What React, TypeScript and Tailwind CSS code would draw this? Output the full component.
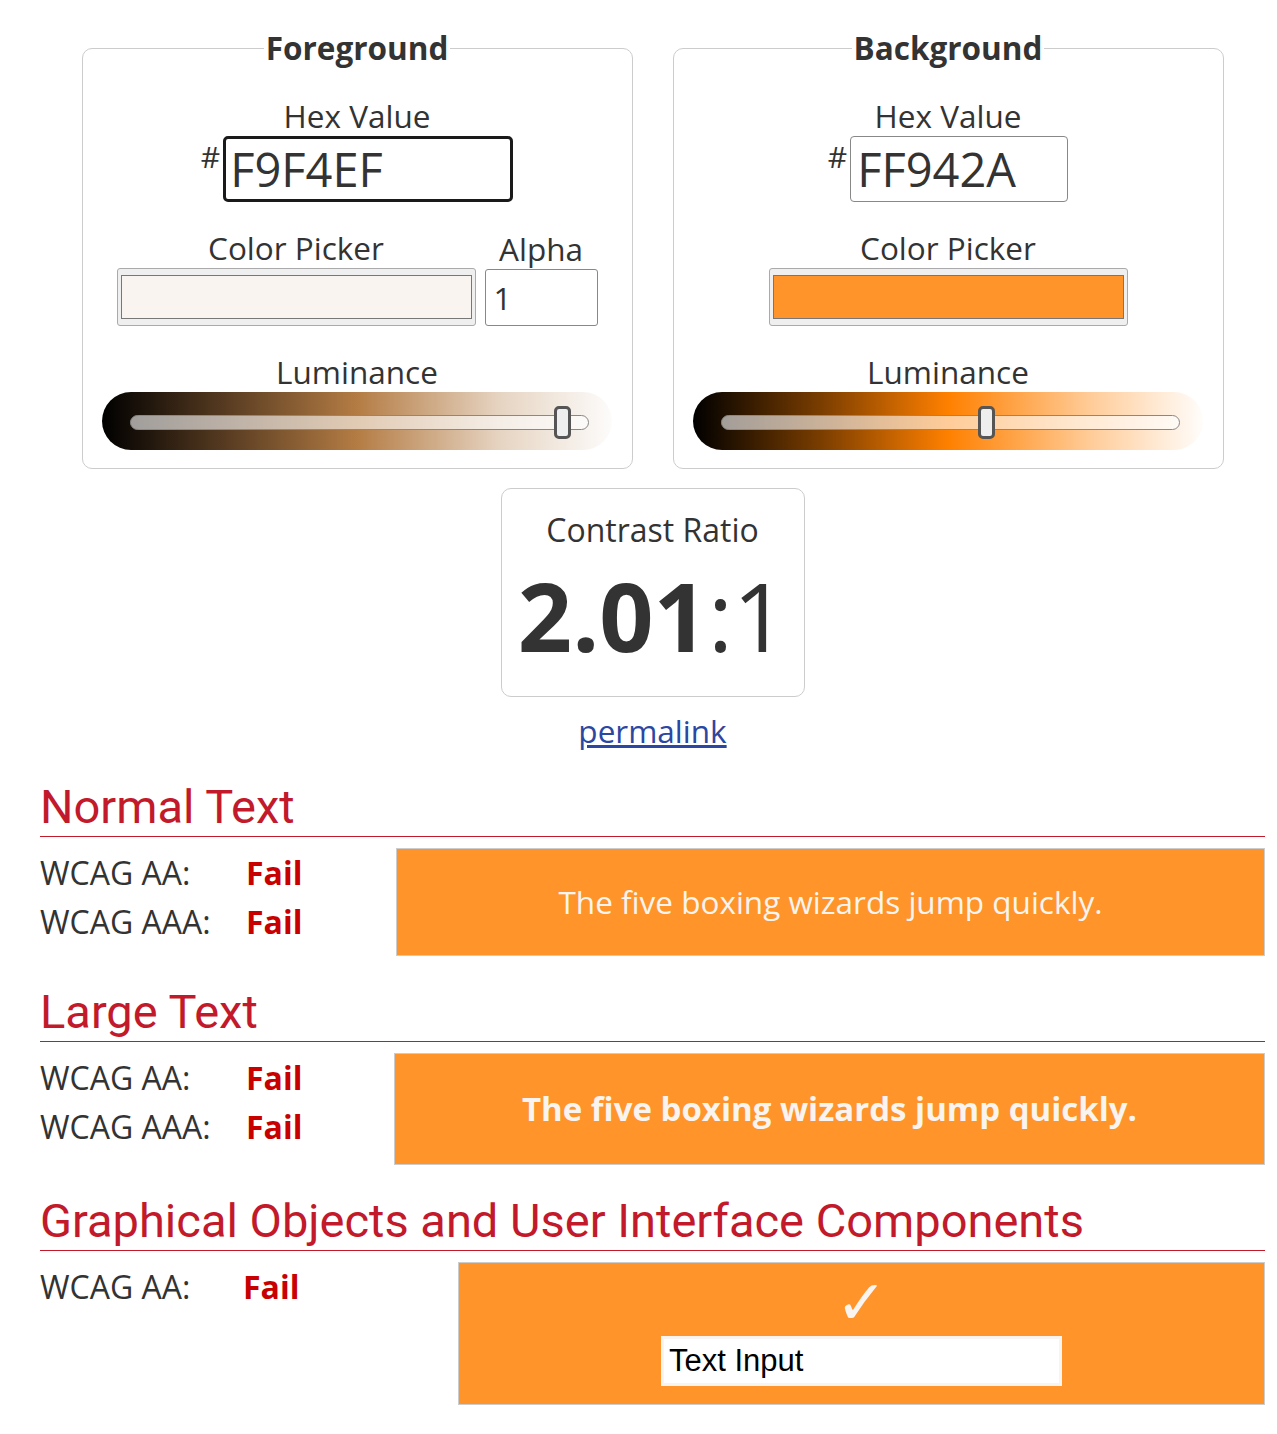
import React from "react";

function Lum({ grad, left }: { grad: string; left: string }) {
  return (
    <div className={`relative w-[510px] h-[58px] rounded-full ${grad}`}>
      <div className="absolute left-[28px] right-[23px] top-[23px] h-[15px] rounded-full border border-[#888] bg-white/60" />
      <div className={`absolute top-[14px] ${left} w-[17px] h-[33px] rounded-[5px] border-[3px] border-[#555] bg-[#eee]`} />
    </div>
  );
}

function Label({ children }: { children: React.ReactNode }) {
  return <div className="text-[31.5px] leading-[36px] text-[#333]">{children}</div>;
}

function Picker({ swatch }: { swatch: string }) {
  return (
    <div className="w-[359px] h-[58px] rounded-[3px] border border-[#aaa] bg-[#efefef] px-[3px] py-[6px]">
      <div className={`w-full h-full border border-[#777] ${swatch}`} />
    </div>
  );
}

function Row({ label, w, h }: { label: string; w: string; h: string }) {
  return (
    <div className={`flex items-center ${h} text-[32px] leading-[36px]`}>
      <span className={`${w} shrink-0 text-[#333]`}>{label}</span>
      <span className="font-bold text-[#c80000]">Fail</span>
    </div>
  );
}

function Heading({ children }: { children: React.ReactNode }) {
  return (
    <div className="font-['Roboto',sans-serif] text-[47px] leading-[54px] text-[#c21a2b]">
      <div className="h-[56px]">{children}</div>
      <div className="h-px bg-[#c21a2b]" />
    </div>
  );
}

export default function App() {
  return (
    <div className="w-[1277px] min-h-[1434px] bg-white text-[#333] pl-[40px] pr-[12px] pt-[30px] font-['Open_Sans',sans-serif]">
      <div className="flex justify-center gap-[40px]">
        <fieldset className="w-[551px] border border-[#ccc] rounded-[10px] pb-[18px] flex flex-col items-center">
          <legend className="mx-auto px-[2px] text-[31.5px] leading-[36px] font-bold text-[#333]">Foreground</legend>
          <div className="mt-[32px]">
            <Label>Hex Value</Label>
          </div>
          <div className="mt-[2px] flex items-start">
            <span className="mt-[3px] mr-[3px] text-[30px] leading-[36px]">#</span>
            <div className="w-[290px] h-[66px] border-[3px] border-[#1a1a1a] rounded-[5px] pl-[4px] flex items-center text-[47px] leading-none text-[#333]">
              F9F4EF
            </div>
          </div>
          <div className="mt-[28px] flex items-end gap-[9px]">
            <div className="flex flex-col items-center">
              <Label>Color Picker</Label>
              <div className="mt-[2px]">
                <Picker swatch="bg-[#f9f4ef]" />
              </div>
            </div>
            <div className="flex flex-col items-center">
              <Label>Alpha</Label>
              <div className="mt-[2px] w-[113px] h-[57px] border border-[#888] rounded-[3px] pl-[8px] flex items-center text-[31.5px] text-[#333]">
                1
              </div>
            </div>
          </div>
          <div className="mt-[28px]">
            <Label>Luminance</Label>
          </div>
          <div className="mt-[2px]">
            <Lum grad="bg-[linear-gradient(to_right,#000_0%,#5a3d22_25%,#b47c44_50%,#e6d4c2_78%,#fdfcfb_100%)]" left="left-[452px]" />
          </div>
        </fieldset>

        <fieldset className="w-[551px] border border-[#ccc] rounded-[10px] pb-[18px] flex flex-col items-center">
          <legend className="mx-auto px-[2px] text-[31.5px] leading-[36px] font-bold text-[#333]">Background</legend>
          <div className="mt-[32px]">
            <Label>Hex Value</Label>
          </div>
          <div className="mt-[2px] flex items-start">
            <span className="mt-[3px] mr-[3px] text-[30px] leading-[36px]">#</span>
            <div className="w-[218px] h-[66px] border border-[#888] rounded-[4px] pl-[6px] flex items-center text-[47px] leading-none text-[#333]">
              FF942A
            </div>
          </div>
          <div className="mt-[28px] flex flex-col items-center">
            <Label>Color Picker</Label>
            <div className="mt-[2px]">
              <Picker swatch="bg-[#ff942a]" />
            </div>
          </div>
          <div className="mt-[28px]">
            <Label>Luminance</Label>
          </div>
          <div className="mt-[2px]">
            <Lum grad="bg-[linear-gradient(to_right,#000_0%,#7a3d00_25%,#ff8000_50%,#ffcc99_78%,#fffdfb_100%)]" left="left-[285px]" />
          </div>
        </fieldset>
      </div>

      <div className="flex flex-col items-center">
        <div className="mt-[19px] w-[304px] h-[209px] border border-[#ccc] rounded-[10px] flex flex-col items-center">
          <div className="pt-[23px] text-[32px] leading-[36px] text-[#333]">Contrast Ratio</div>
          <div className="mt-[17px] text-[95px] leading-[100px] text-[#333]">
            <span className="font-bold">2.01</span>
            <span>:1</span>
          </div>
        </div>
        <a href="#" className="mt-[16px] text-[31.5px] leading-[36px] text-[#2b47a3] underline">
          permalink
        </a>
      </div>

      <div className="mt-[31px]">
        <Heading>Normal Text</Heading>
        <div className="mt-[11px] flex">
          <div className="w-[356px]">
            <Row label="WCAG AA:" w="w-[206px]" h="h-[49px]" />
            <Row label="WCAG AAA:" w="w-[206px]" h="h-[50px]" />
          </div>
          <div className="flex-1 h-[108px] border border-[#ccc] bg-[#ff942a] flex items-center justify-center text-[31.5px] text-[#f9f4ef]">
            The five boxing wizards jump quickly.
          </div>
        </div>
      </div>

      <div className="mt-[29px]">
        <Heading>Large Text</Heading>
        <div className="mt-[11px] flex">
          <div className="w-[354px]">
            <Row label="WCAG AA:" w="w-[206px]" h="h-[49px]" />
            <Row label="WCAG AAA:" w="w-[206px]" h="h-[50px]" />
          </div>
          <div className="flex-1 h-[112px] border border-[#ccc] bg-[#ff942a] flex items-center justify-center text-[33px] font-bold text-[#f9f4ef]">
            The five boxing wizards jump quickly.
          </div>
        </div>
      </div>

      <div className="mt-[29px]">
        <Heading>Graphical Objects and User Interface Components</Heading>
        <div className="mt-[11px] flex">
          <div className="w-[418px]">
            <Row label="WCAG AA:" w="w-[203px]" h="h-[49px]" />
          </div>
          <div className="flex-1 h-[143px] border border-[#ccc] bg-[#ff942a] flex flex-col items-center pt-[9px]">
            <div className="font-['DejaVu_Sans',sans-serif] text-[62px] leading-[62px] text-[#f9f4ef]">✓</div>
            <div className="mt-[2px] w-[401px] h-[50px] bg-white border-[3px] border-[#f9f4ef] pl-[5px] flex items-center font-['Liberation_Sans',Arial,sans-serif] text-[31px] text-black">
              Text Input
            </div>
          </div>
        </div>
      </div>
    </div>
  );
}
